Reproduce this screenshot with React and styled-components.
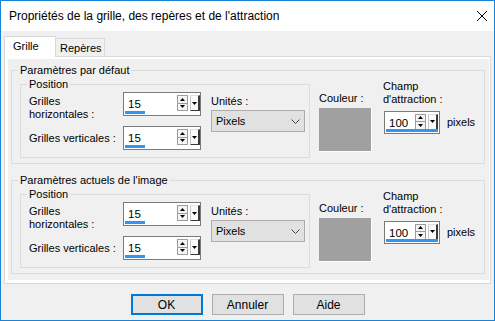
import React from 'react';
import styled, { createGlobalStyle } from 'styled-components';

const GlobalStyle = createGlobalStyle`
  html, body {
    margin: 0;
    padding: 0;
    background: #ffffff;
  }
  body {
    font-family: "Liberation Sans", Arial, sans-serif;
    color: #000000;
  }
`;

const Window = styled.div`
  width: 495px;
  height: 321px;
  box-sizing: border-box;
  border: 1px solid #1883d7;
  background: #f0f0f0;
  display: flex;
  flex-direction: column;
`;

const TitleBar = styled.div`
  flex: none;
  height: 30px;
  background: #ffffff;
  display: flex;
  align-items: center;
  justify-content: space-between;
  padding: 0 6px 0 8px;
  font-size: 12px;
  color: #000;
`;

const Body = styled.div`
  flex: 1;
  display: flex;
  flex-direction: column;
  padding-top: 5px;
`;

const TabRow = styled.div`
  display: flex;
  align-items: flex-end;
  height: 20px;
  padding-left: 3px;
`;

const Tab = styled.div`
  box-sizing: border-box;
  width: ${p => p.$w}px;
  height: ${p => (p.$active ? 21 : 18)}px;
  margin-bottom: ${p => (p.$active ? -1 : 0)}px;
  margin-left: ${p => (p.$active ? 0 : -1)}px;
  position: relative;
  z-index: ${p => (p.$active ? 1 : 0)};
  border: 1px solid #d9d9d9;
  border-bottom: none;
  background: ${p => (p.$active ? '#ffffff' : '#f0f0f0')};
  padding: ${p => (p.$active ? '2px 0 0 8px' : '2px 0 0 4px')};
  font-size: 11px;
  line-height: 14px;
`;

const Panel = styled.div`
  box-sizing: border-box;
  height: 228px;
  margin: 0 3px;
  border: 1px solid #d9d9d9;
  background: #ffffff;
  padding: 2px 1px 3px 3px;
`;

const Page = styled.div`
  height: 100%;
  background: #f0f0f0;
  display: flex;
  flex-direction: column;
`;

const Group = styled.fieldset`
  box-sizing: border-box;
  height: ${p => p.$h}px;
  width: ${p => (p.$w ? `${p.$w}px` : 'auto')};
  margin: ${p => p.$m};
  padding: 0;
  min-width: 0;
  border: 1px solid #dcdcdc;
`;

const Legend = styled.legend`
  margin-left: 6px;
  padding: 0 2px;
  font-size: 11px;
  line-height: 13px;
`;

const Row = styled.div`
  display: flex;
  align-items: flex-start;
  padding-left: ${p => p.$pl || 0}px;
`;

const Grid = styled.div`
  display: grid;
  grid-template-columns: 94px 78px;
  grid-template-rows: 24px 24px;
  row-gap: 10px;
  align-items: center;
  padding-top: 1px;
`;

const Label = styled.div`
  font-size: 11px;
  line-height: 13px;
  white-space: nowrap;
  align-self: ${p => (p.$top ? 'start' : 'auto')};
  margin-top: ${p => p.$mt || 0}px;
`;

const Column = styled.div`
  display: flex;
  flex-direction: column;
  align-items: flex-start;
  margin-left: ${p => p.$ml}px;
  padding-top: ${p => p.$pt}px;
`;

const SpinBox = styled.div`
  box-sizing: border-box;
  position: relative;
  width: ${p => p.$w}px;
  height: ${p => p.$h}px;
  border: 1px solid #7a7a7a;
  background: #ffffff;
  display: flex;
  align-items: center;
  margin-left: ${p => p.$ml || 0}px;
`;

const SpinValue = styled.span`
  flex: 1;
  padding-left: 4px;
  font-size: 11.5px;
  line-height: 14px;
`;

const SpinBar = styled.div`
  position: absolute;
  left: 1px;
  bottom: 1px;
  height: 3px;
  background: #3592ee;
`;

const SpinControls = styled.div`
  display: flex;
  gap: 2px;
  height: 16px;
  margin-right: ${p => p.$mr}px;
  margin-bottom: 2px;
`;

const Arrows = styled.div`
  display: flex;
  flex-direction: column;
  width: 11px;
`;

const ArrowBtn = styled.div`
  flex: 1;
  box-sizing: border-box;
  border: 1px solid #9c9c9c;
  background: #f4f4f4;
  display: flex;
  align-items: center;
  justify-content: center;
  & + & {
    border-top: none;
  }
`;

const DropPart = styled.div`
  box-sizing: border-box;
  width: 10px;
  background: #fafafa;
  border-left: 1px solid #c8c8c8;
  border-top: 1px solid #e0e0e0;
  border-right: 2px solid #3a3a3a;
  border-bottom: 1px solid #3a3a3a;
  display: flex;
  align-items: center;
  justify-content: center;
`;

const Select = styled.div`
  box-sizing: border-box;
  width: 94px;
  height: 22px;
  margin-top: 2px;
  border: 1px solid #adadad;
  background: #e1e1e1;
  display: flex;
  align-items: center;
  justify-content: space-between;
  padding: 0 4px 0 4px;
  font-size: 11px;
`;

const Swatch = styled.div`
  box-sizing: border-box;
  width: 53px;
  height: 44px;
  margin-top: 3px;
  background: #a0a0a0;
  border-right: 1px solid #ffffff;
  border-bottom: 1px solid #ffffff;
`;

const InputRow = styled.div`
  display: flex;
  align-items: center;
  gap: 7px;
  margin-top: 5px;
`;

const ButtonRow = styled.div`
  display: flex;
  justify-content: center;
  gap: 9px;
  margin-top: 10px;
`;

const Button = styled.button`
  box-sizing: border-box;
  width: 72px;
  height: 21px;
  padding: 0;
  border: ${p => (p.$default ? '2px solid #0078d7' : '1px solid #adadad')};
  background: #e1e1e1;
  font-family: "Liberation Sans", Arial, sans-serif;
  font-size: 12px;
  color: #000;
`;

const Tri = ({ down }) => (
  <svg width="5" height="3" viewBox="0 0 5 3">
    <path d={down ? 'M0 0H5L2.5 3Z' : 'M0 3H5L2.5 0Z'} fill="#000" />
  </svg>
);

function Spin({ value, w, h = 24, bar, mr = 0, ml }) {
  return (
    <SpinBox $w={w} $h={h} $ml={ml}>
      <SpinValue>{value}</SpinValue>
      <SpinControls $mr={mr}>
        <Arrows>
          <ArrowBtn><Tri /></ArrowBtn>
          <ArrowBtn><Tri down /></ArrowBtn>
        </Arrows>
        <DropPart><Tri down /></DropPart>
      </SpinControls>
      <SpinBar style={{ width: bar }} />
    </SpinBox>
  );
}

function SettingsGroup({ title, mt }) {
  return (
    <Group $h={100} $m={`${mt}px 4px 0 3px`}>
      <Legend>{title}</Legend>
      <Row>
        <Group $h={80} $w={290} $m="1px 0 0 8px">
          <Legend>Position</Legend>
          <Row $pl={8}>
            <Grid>
              <Label $top $mt={3}>Grilles<br />horizontales :</Label>
              <Spin value="15" w={78} bar={20} />
              <Label>Grilles verticales :</Label>
              <Spin value="15" w={78} bar={20} />
            </Grid>
            <Column $ml={10} $pt={4}>
              <Label>Unités :</Label>
              <Select>
                <span>Pixels</span>
                <svg width="9" height="5" viewBox="0 0 9 5">
                  <path d="M0.5 0.5L4.5 4.5L8.5 0.5" fill="none" stroke="#444" strokeWidth="1" />
                </svg>
              </Select>
            </Column>
          </Row>
        </Group>
        <Column $ml={9} $pt={15}>
          <Label>Couleur :</Label>
          <Swatch />
        </Column>
        <Column $ml={11} $pt={3}>
          <Label>Champ<br />d'attraction :</Label>
          <InputRow>
            <Spin value="100" w={56} h={23} bar={52} mr={1} ml={1} />
            <Label>pixels</Label>
          </InputRow>
        </Column>
      </Row>
    </Group>
  );
}

export default function App() {
  return (
    <>
      <GlobalStyle />
      <Window>
        <TitleBar>
          <span>Propriétés de la grille, des repères et de l'attraction</span>
          <svg width="12" height="12" viewBox="0 0 12 12">
            <path d="M1 1L11 11M11 1L1 11" stroke="#000" strokeWidth="1" />
          </svg>
        </TitleBar>
        <Body>
          <TabRow>
            <Tab $active $w={52}>Grille</Tab>
            <Tab $w={50}>Repères</Tab>
          </TabRow>
          <Panel>
            <Page>
              <SettingsGroup title="Paramètres par défaut" mt={5} />
              <SettingsGroup title="Paramètres actuels de l'image" mt={10} />
            </Page>
          </Panel>
          <ButtonRow>
            <Button $default>OK</Button>
            <Button>Annuler</Button>
            <Button>Aide</Button>
          </ButtonRow>
        </Body>
      </Window>
    </>
  );
}
